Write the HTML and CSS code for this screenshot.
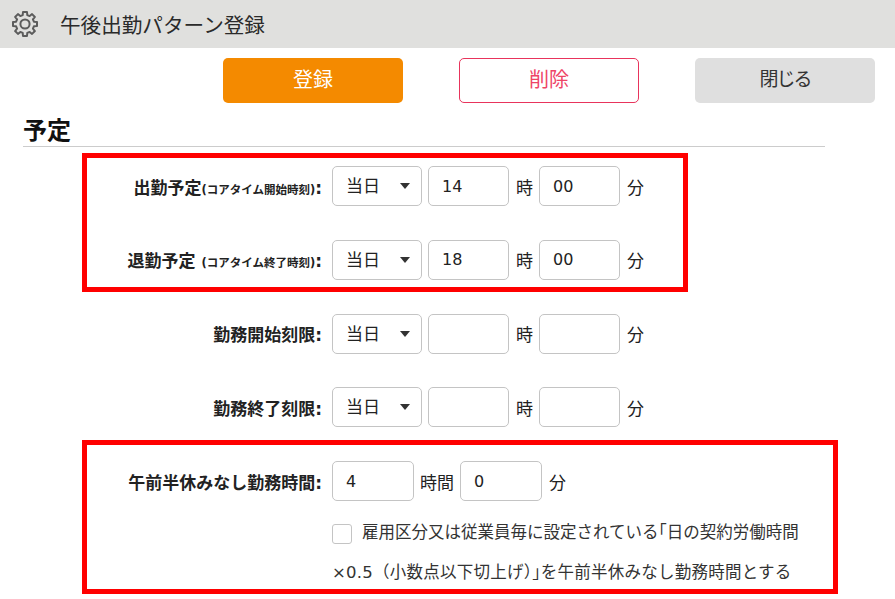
FILE: index.html
```html
<!DOCTYPE html>
<html lang="ja">
<head>
<meta charset="utf-8">
<title>午後出勤パターン登録</title>
<link rel="stylesheet" href="styles.css">
</head>
<body>
<header class="title-bar">
  <svg class="gear" viewBox="-14 -14 28 28" aria-hidden="true">
    <path d="M-2.3-8.9-2-12H2L2.3-8.9 4.67-7.92 7.07-9.9 9.9-7.07 7.92-4.67 8.9-2.3 12-2V2L8.9 2.3 7.92 4.67 9.9 7.07 7.07 9.9 4.67 7.92 2.3 8.9 2 12H-2L-2.3 8.9-4.67 7.92-7.07 9.9-9.9 7.07-7.92 4.67-8.9 2.3-12 2V-2L-8.9-2.3-7.92-4.67-9.9-7.07-7.07-9.9-4.67-7.92Z"/>
    <circle r="4.6"/>
  </svg>
  <h1 class="title">午後出勤パターン登録</h1>
</header>
<div class="actions">
  <button class="btn btn-save" type="button">登録</button>
  <button class="btn btn-delete" type="button">削除</button>
  <button class="btn btn-close" type="button">閉じる</button>
</div>
<main class="content">
  <h2 class="section-title">予定</h2>
  <form class="form">
    <div class="row">
      <label class="label">出勤予定<small>(コアタイム開始時刻)</small>:</label>
      <div class="controls">
        <span class="select-wrap"><select class="select"><option>当日</option></select></span>
        <input class="input" value="14"><span class="unit">時</span>
        <input class="input" value="00"><span class="unit">分</span>
      </div>
    </div>
    <div class="row">
      <label class="label">退勤予定 <small>(コアタイム終了時刻)</small>:</label>
      <div class="controls">
        <span class="select-wrap"><select class="select"><option>当日</option></select></span>
        <input class="input" value="18"><span class="unit">時</span>
        <input class="input" value="00"><span class="unit">分</span>
      </div>
    </div>
    <div class="row">
      <label class="label">勤務開始刻限:</label>
      <div class="controls">
        <span class="select-wrap"><select class="select"><option>当日</option></select></span>
        <input class="input"><span class="unit">時</span>
        <input class="input"><span class="unit">分</span>
      </div>
    </div>
    <div class="row">
      <label class="label">勤務終了刻限:</label>
      <div class="controls">
        <span class="select-wrap"><select class="select"><option>当日</option></select></span>
        <input class="input"><span class="unit">時</span>
        <input class="input"><span class="unit">分</span>
      </div>
    </div>
    <div class="row">
      <label class="label">午前半休みなし勤務時間:</label>
      <div class="controls">
        <input class="input input-wide" value="4"><span class="unit unit-long">時間</span>
        <input class="input input-wide" value="0"><span class="unit">分</span>
      </div>
    </div>
    <div class="note">
      <span class="checkbox"></span>雇用区分又は従業員毎に設定されている｢日の契約労働時間<br><span class="note-second">×0.5（小数点以下切上げ）｣を午前半休みなし勤務時間とする</span>
    </div>
  </form>
</main>
<div class="highlight highlight-a"></div>
<div class="highlight highlight-b"></div>
</body>
</html>
```
FILE: styles.css
```css
* { box-sizing: border-box; }
html, body { height: 100%; }
body {
  margin: 0;
  position: relative;
  overflow: hidden;
  background: #fff;
  color: #222;
  font-family: "DejaVu Sans", "Noto Sans CJK JP", sans-serif;
  font-size: 16px;
}
.title-bar {
  height: 48px;
  background: #e0e0de;
  display: flex;
  align-items: center;
  gap: 21px;
  padding-left: 11px;
}
.gear { width: 28px; height: 28px; flex: none; }
.gear path, .gear circle { fill: none; stroke: #5c5c5c; stroke-width: 2; stroke-linejoin: round; }
.title { margin: 0; font-size: 20.6px; font-weight: 400; color: #2a2a2a; white-space: nowrap; }
.actions {
  display: flex;
  justify-content: flex-end;
  gap: 56px;
  padding: 10px 20px 0 0;
}
.btn {
  width: 180px;
  height: 45px;
  border-radius: 5px;
  border: 1px solid transparent;
  font: inherit;
  font-size: 20px;
  line-height: 1;
  padding: 0 0 2px;
}
.btn-save { background: #f48a00; color: #fff; }
.btn-delete { background: #fff; border-color: #e8345c; color: #ee4466; }
.btn-close { background: #dfdfdf; color: #333; font-size: 19px; letter-spacing: -2px; }
.content { padding: 0 70px 0 23px; }
.section-title {
  margin: 0;
  height: 44px;
  padding-top: 13px;
  border-bottom: 1px solid #ccc;
  font-size: 24px;
  line-height: 30px;
  font-weight: 700;
  color: #111;
}
.form {
  display: flex;
  flex-direction: column;
  gap: 33.75px;
  padding-top: 19px;
}
.row { display: flex; align-items: center; height: 40px; }
.label {
  width: 299px;
  flex: none;
  text-align: right;
  font-weight: 700;
  font-size: 17px;
  white-space: nowrap;
}
.label small { font-size: 11.5px; }
.controls {
  display: flex;
  align-items: center;
  gap: 6px;
  margin-left: 10px;
}
.select-wrap { position: relative; display: block; width: 90px; height: 40px; }
.select-wrap::after {
  content: "";
  position: absolute;
  top: 17px;
  right: 12px;
  border: 5px solid transparent;
  border-top: 6px solid #333;
  border-bottom: 0;
}
.select, .input {
  height: 40px;
  border: 1px solid #c4c4c4;
  border-radius: 5px;
  background: #fff;
  font: inherit;
  color: #222;
  padding: 0 13px;
}
.select { width: 100%; appearance: none; font-size: 17px; }
.input { width: 81px; }
.input-wide { width: 82px; }
.unit { white-space: nowrap; font-size: 17px; padding-left: 1px; }
.unit-long { padding-left: 0; }
.note {
  margin-top: -33.75px;
  padding-left: 309px;
  padding-top: 12px;
  line-height: 40px;
  white-space: nowrap;
  font-size: 16.5px;
  color: #333;
}
.note-second { letter-spacing: 0.25px; }
.checkbox {
  display: inline-block;
  vertical-align: middle;
  width: 20px;
  height: 20px;
  margin-right: 10px;
  border: 1px solid #c4c4c4;
  border-radius: 3px;
}
.highlight { position: absolute; border: 5px solid #f00; pointer-events: none; }
.highlight-a { left: 82px; top: 153px; width: 606px; height: 139px; }
.highlight-b { left: 82px; top: 440px; width: 756px; height: 154px; }
```
